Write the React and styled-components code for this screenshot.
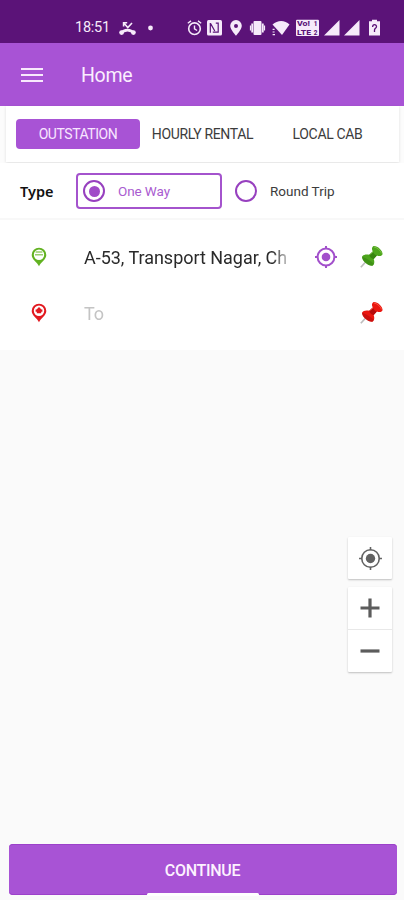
import React, { useState } from "react";
import styled, { createGlobalStyle } from "styled-components";

const GlobalStyle = createGlobalStyle`
  * {
    box-sizing: border-box;
  }

  body {
    margin: 0;
    background-color: #fafafa;
    font-family: Roboto, "Liberation Sans", sans-serif;
  }

  svg {
    display: block;
    flex-shrink: 0;
  }
`;

const Screen = styled.div`
  display: flex;
  flex-direction: column;
  width: 404px;
  height: 900px;
  overflow: hidden;
  background-color: #fafafa;
`;

const StatusBar = styled.div`
  display: flex;
  align-items: center;
  height: 43px;
  flex-shrink: 0;
  padding: 12px 0 0 75px;
  background-color: #5b1378;
  color: #f6eafa;
`;

const Clock = styled.span`
  width: 35px;
  font-size: 14.5px;
  line-height: 16px;
  letter-spacing: -0.25px;
  white-space: nowrap;
`;

const StatusIcon = styled.svg`
  width: ${(props) => props.$width}px;
  height: 18px;
  margin-left: ${(props) => props.$gap}px;
  overflow: visible;
`;

const AppBar = styled.header`
  display: flex;
  align-items: center;
  height: 63px;
  flex-shrink: 0;
  padding: 0 21px;
  background-color: #a853d5;
  color: #faeefe;
`;

const MenuButton = styled.button`
  display: flex;
  flex-direction: column;
  gap: 4px;
  width: 22px;
  padding: 0;
  border: none;
  background: none;
`;

const MenuLine = styled.span`
  height: 2px;
  background-color: #f8e9fd;
`;

const PageTitle = styled.h1`
  margin: 2px 0 0 38px;
  font-size: 19.5px;
  font-weight: 400;
  line-height: 24px;
  letter-spacing: -0.3px;
`;

const Tabs = styled.nav`
  display: flex;
  align-items: flex-start;
  height: 56px;
  flex-shrink: 0;
  margin: 0 5px 0 6px;
  padding: 13px 0 0 10px;
  background-color: #fff;
  box-shadow: 0 1px 3px rgba(0, 0, 0, 0.12);
`;

const TabsArea = styled.div`
  height: 57px;
  flex-shrink: 0;
  background-color: #fcfcfc;
`;

const Tab = styled.button`
  width: ${(props) => props.$width}px;
  height: 30px;
  padding: 0;
  border: none;
  border-radius: 4px;
  background-color: ${(props) => (props.$active ? "#a853d5" : "transparent")};
  color: ${(props) => (props.$active ? "#f8e6ff" : "#3c3c3c")};
  font-family: inherit;
  font-size: 14px;
  letter-spacing: ${(props) => props.$spacing}px;
  white-space: nowrap;
`;

const TypeRow = styled.div`
  display: flex;
  align-items: center;
  height: 57px;
  flex-shrink: 0;
  padding: 1px 0 0 20px;
  background-color: #fff;
  border-bottom: 2px solid #f8f8f8;
`;

const TypeLabel = styled.span`
  width: 56px;
  font-family: "Noto Sans", sans-serif;
  font-size: 14.5px;
  font-weight: 600;
  line-height: 20px;
  color: #111;
`;

const TypeOption = styled.button`
  display: flex;
  align-items: center;
  width: 146px;
  height: 36px;
  margin-right: 6px;
  padding: 0 0 0 5px;
  border: 2px solid ${(props) => (props.$active ? "#a453cd" : "transparent")};
  border-radius: 4px;
  background: none;
  color: ${(props) => (props.$active ? "#a95bd0" : "#3c3c3c")};
  font-family: inherit;
  font-size: 13.5px;
  letter-spacing: ${(props) => props.$spacing}px;
`;

const Radio = styled.span`
  display: flex;
  align-items: center;
  justify-content: center;
  width: 22px;
  height: 22px;
  margin-right: 13px;
  border: 2px solid #9740bf;
  border-radius: 50%;
`;

const RadioDot = styled.span`
  width: 11px;
  height: 11px;
  border-radius: 50%;
  background-color: #a04bc8;
`;

const Addresses = styled.div`
  height: 130px;
  flex-shrink: 0;
  padding-top: 9px;
  background-color: #fff;
`;

const AddressRow = styled.div`
  display: flex;
  align-items: center;
  height: 56px;
  padding: 0 20px 0 31px;
`;

const AddressText = styled.div`
  width: 203px;
  margin: 2px 27px 0 37px;
  overflow: hidden;
  font-size: 18px;
  line-height: 22px;
  letter-spacing: -0.03px;
  white-space: nowrap;
  color: ${(props) => (props.$empty ? "#c4c4c4" : "#2a2a2a")};
  mask-image: linear-gradient(to right, #000 188px, rgba(0, 0, 0, 0.3) 203px);
`;

const LocateSlot = styled.div`
  width: 24px;
  margin-right: 22px;
`;

const MapArea = styled.main`
  display: flex;
  flex-direction: column;
  align-items: flex-end;
  flex: 1;
  padding: 187px 12px 0 0;
`;

const MapControls = styled.div`
  margin-bottom: 8px;
  background-color: #fff;
  border-radius: 1px;
  box-shadow: 0 1px 2px rgba(0, 0, 0, 0.24);
`;

const MapButton = styled.button`
  display: flex;
  align-items: center;
  justify-content: center;
  width: 44px;
  height: ${(props) => props.$height}px;
  padding: 0;
  border: none;
  background: none;

  & + & {
    border-top: 1px solid #e8e8e8;
  }
`;

const Footer = styled.footer`
  display: flex;
  flex-direction: column;
  align-items: center;
  height: 56px;
  flex-shrink: 0;
  padding-left: 1px;
`;

const ContinueButton = styled.button`
  width: 388px;
  height: 51px;
  flex-shrink: 0;
  padding: 1px 0 0;
  border: none;
  border-radius: 4px;
  background-color: #a853d5;
  box-shadow: inset 0 1px 0 #9c41ca, inset 0 -1px 0 #9c41ca;
  color: #fdf2ff;
  font-family: inherit;
  font-size: 16px;
  font-weight: 500;
  letter-spacing: -0.3px;
`;

const HomeIndicator = styled.div`
  width: 112px;
  height: 3px;
  flex-shrink: 0;
  margin-top: -2px;
  border-radius: 2px;
  background-color: #fff;
  z-index: 1;
`;

const StatusIcons = () => (
  <>
    <StatusIcon $width={17} $gap={9} viewBox="0 0 17 18" fill="none" stroke="currentColor">
      <path d="M2 14.2C5.5 10 11.5 10 15 14.2" strokeWidth="2.8" />
      <circle cx="2.6" cy="13.6" r="2.4" fill="currentColor" stroke="none" />
      <circle cx="14.4" cy="13.6" r="2.4" fill="currentColor" stroke="none" />
      <path d="M4.6 7.4V3.8h3.6M4.8 4l4 4.6L13 4" strokeWidth="1.6" />
    </StatusIcon>
    <StatusIcon $width={5} $gap={12} viewBox="0 0 5 18" fill="currentColor">
      <circle cx="2.5" cy="9" r="2.4" />
    </StatusIcon>
    <StatusIcon $width={15} $gap={34} viewBox="0 0 15 18" fill="none" stroke="currentColor">
      <circle cx="7.5" cy="9.7" r="5.8" strokeWidth="1.6" />
      <path d="M7.5 6.5v3.4l2.6 1.6M.8 4.2L4 1.9M14.2 4.2L11 1.9" strokeWidth="1.4" />
    </StatusIcon>
    <StatusIcon $width={15} $gap={5} viewBox="0 0 15 18">
      <rect y="1" width="15" height="15.5" rx="1.5" fill="currentColor" />
      <path d="M3.3 4v9.7M3.6 4.6L7.8 12M5.8 13.2h5.4V4.2H8.8" fill="none" stroke="#5b1378" strokeWidth="1.2" />
    </StatusIcon>
    <StatusIcon $width={12} $gap={8} viewBox="0 0 12 18" fill="currentColor">
      <path
        fillRule="evenodd"
        d="M6 1A5.8 5.8 0 0 0 .2 6.8C.2 10.6 6 16.8 6 16.8S11.8 10.6 11.8 6.8A5.8 5.8 0 0 0 6 1ZM6 4.9a2 2 0 1 1 0 4 2 2 0 0 1 0-4Z"
      />
    </StatusIcon>
    <StatusIcon $width={15} $gap={8} viewBox="0 0 15 18" fill="currentColor">
      <rect x="3.5" y="2" width="8" height="14" rx="1" />
      <path d="M2.2 4.5v9M12.8 4.5v9" stroke="currentColor" strokeWidth="1.8" />
      <path d="M.5 6.5v5M14.5 6.5v5" stroke="currentColor" strokeWidth="1.2" />
    </StatusIcon>
    <StatusIcon $width={18} $gap={7} viewBox="0 0 18 18" fill="currentColor">
      <path d="M.5 5.5C5.5.7 13 .7 17.5 5.5L10 16Z" />
      <path d="M.6 10.4h2M.6 13h2M.6 15.6h2.4" stroke="currentColor" strokeWidth="1.2" />
    </StatusIcon>
    <StatusIcon $width={23} $gap={6} viewBox="0 0 23 18">
      <rect y="0.7" width="23" height="16.3" rx="1" fill="currentColor" />
      <g fill="#5b1378" fontFamily="Roboto, sans-serif" fontSize="6.4" fontWeight="800">
        <text x="1" y="7.3" textLength="13" lengthAdjust="spacingAndGlyphs">Vo!</text>
        <text x="1" y="15.6" textLength="14" lengthAdjust="spacingAndGlyphs">LTE</text>
        <text x="17.8" y="7.3">1</text>
        <text x="17.8" y="15.6">2</text>
      </g>
    </StatusIcon>
    <StatusIcon $width={16} $gap={5} viewBox="0 0 16 18" fill="currentColor">
      <path d="M0 16.5L15.5 1V16.5Z" />
    </StatusIcon>
    <StatusIcon $width={16} $gap={4} viewBox="0 0 16 18" fill="currentColor">
      <path d="M0 16.5L15.5 1V16.5Z" />
    </StatusIcon>
    <StatusIcon $width={11} $gap={9} viewBox="0 0 11 18" fill="currentColor">
      <path d="M3 .8h5v1.5h3V16.6H0V2.3h3Z" />
      <path d="M3.6 8C3.6 4.9 7.7 5.1 7.5 7.7 7.4 9.3 5.5 9.4 5.5 11v2" fill="none" stroke="#5b1378" strokeWidth="1.3" />
    </StatusIcon>
  </>
);

const PlaceMarker = ({ color, start }) => (
  <svg width="16" height="20" viewBox="0 0 16 20" fill="none">
    <path d="M8 .7A7.3 7.3 0 0 0 .7 8C.7 12.5 6 15 8 19.3 10 15 15.3 12.5 15.3 8A7.3 7.3 0 0 0 8 .7Z" fill={color} />
    <circle cx="8" cy="7.7" r="5.2" fill="#fff" />
    {start ? (
      <path d="M4.6 5h6.8M4 7.8h8" stroke={color} strokeWidth="1.5" opacity=".65" />
    ) : (
      <path d="M8 4L5.5 6.4H4.6v2.4h1.2v1.4h4.4V8.8h1.2V6.4h-.9Z" fill={color} />
    )}
  </svg>
);

const Target = ({ color, size, dot, stroke = 2 }) => (
  <svg width={size} height={size} viewBox="0 0 24 24" fill="none" stroke={color} strokeWidth={stroke}>
    <circle cx="12" cy="12" r="8.4" />
    <path d="M12 1v3M12 20v3M1 12h3M20 12h3" />
    <circle cx="12" cy="12" r={dot} fill={color} stroke="none" />
  </svg>
);

const PushPin = ({ main, dark, light }) => (
  <svg width="24" height="24" viewBox="0 0 24 24">
    <path d="M7.5 15L.8 22.3" stroke="#bdbdbd" strokeWidth="1.7" />
    <path
      d="M2 11.8C3.2 9.6 6 9 9.3 9.8L12.8 6.4C11.4 4 11.8 2 13.6.9 17.3.5 22.6 5 22.6 9.2 21.4 11.3 19.3 11.6 16.9 10.4L13.7 14C14.8 17 14.4 19.5 12.4 20.8 8.5 21.2 2 16.2 2 11.8Z"
      fill={main}
    />
    <path d="M9.3 9.8C9.6 11.8 11.4 13.7 13.7 14L16.9 10.4C15 9.8 13.4 8.3 12.8 6.4Z" fill={dark} />
    <path d="M2 11.8C4.5 12.5 10 15.2 13.9 18.8 13.6 19.7 13.1 20.4 12.4 20.8 8.5 21.2 2 16.2 2 11.8Z" fill={dark} opacity=".6" />
    <path d="M14 2C17 2.4 20.5 5.4 21.6 8.4M10.3 9.4L13 6.9" fill="none" stroke={light} strokeWidth="1" opacity=".7" />
  </svg>
);

const App = () => {
  const [tab, setTab] = useState("outstation");
  const [trip, setTrip] = useState("one");

  return (
    <>
      <GlobalStyle />
      <Screen>
        <StatusBar>
          <Clock>18:51</Clock>
          <StatusIcons />
        </StatusBar>
        <AppBar>
          <MenuButton aria-label="Menu">
            <MenuLine />
            <MenuLine />
            <MenuLine />
          </MenuButton>
          <PageTitle>Home</PageTitle>
        </AppBar>
        <TabsArea>
          <Tabs>
            <Tab $width={124} $spacing={-0.45} $active={tab === "outstation"} onClick={() => setTab("outstation")}>
              OUTSTATION
            </Tab>
            <Tab $width={125} $spacing={-0.35} $active={tab === "hourly"} onClick={() => setTab("hourly")}>
              HOURLY RENTAL
            </Tab>
            <Tab $width={125} $spacing={-0.35} $active={tab === "local"} onClick={() => setTab("local")}>
              LOCAL CAB
            </Tab>
          </Tabs>
        </TabsArea>
        <TypeRow>
          <TypeLabel>Type</TypeLabel>
          <TypeOption $active={trip === "one"} $spacing={-0.1} onClick={() => setTrip("one")}>
            <Radio>{trip === "one" && <RadioDot />}</Radio>
            One Way
          </TypeOption>
          <TypeOption $active={trip === "round"} $spacing={0} onClick={() => setTrip("round")}>
            <Radio>{trip === "round" && <RadioDot />}</Radio>
            Round Trip
          </TypeOption>
        </TypeRow>
        <Addresses>
          <AddressRow>
            <PlaceMarker color="#62b221" start />
            <AddressText>A-53, Transport Nagar, Ch</AddressText>
            <LocateSlot>
              <Target color="#a250cb" size={24} dot={4.3} />
            </LocateSlot>
            <PushPin main="#4da51d" dark="#378511" light="#8acb4d" />
          </AddressRow>
          <AddressRow>
            <PlaceMarker color="#e21920" />
            <AddressText $empty>To</AddressText>
            <LocateSlot />
            <PushPin main="#ea1710" dark="#b60b0b" light="#ff6a56" />
          </AddressRow>
        </Addresses>
        <MapArea>
          <MapControls>
            <MapButton $height={42} aria-label="My location">
              <Target color="#626262" size={25} dot={4.5} stroke={1.5} />
            </MapButton>
          </MapControls>
          <MapControls>
            <MapButton $height={42} aria-label="Zoom in">
              <svg width="20" height="20" viewBox="0 0 20 20" stroke="#5c5c5c" strokeWidth="3.2">
                <path d="M.5 10h19M10 .5v19" />
              </svg>
            </MapButton>
            <MapButton $height={43} aria-label="Zoom out">
              <svg width="20" height="20" viewBox="0 0 20 20" stroke="#5c5c5c" strokeWidth="3.2">
                <path d="M.5 10h19" />
              </svg>
            </MapButton>
          </MapControls>
        </MapArea>
        <Footer>
          <ContinueButton>CONTINUE</ContinueButton>
          <HomeIndicator />
        </Footer>
      </Screen>
    </>
  );
};

export default App;
